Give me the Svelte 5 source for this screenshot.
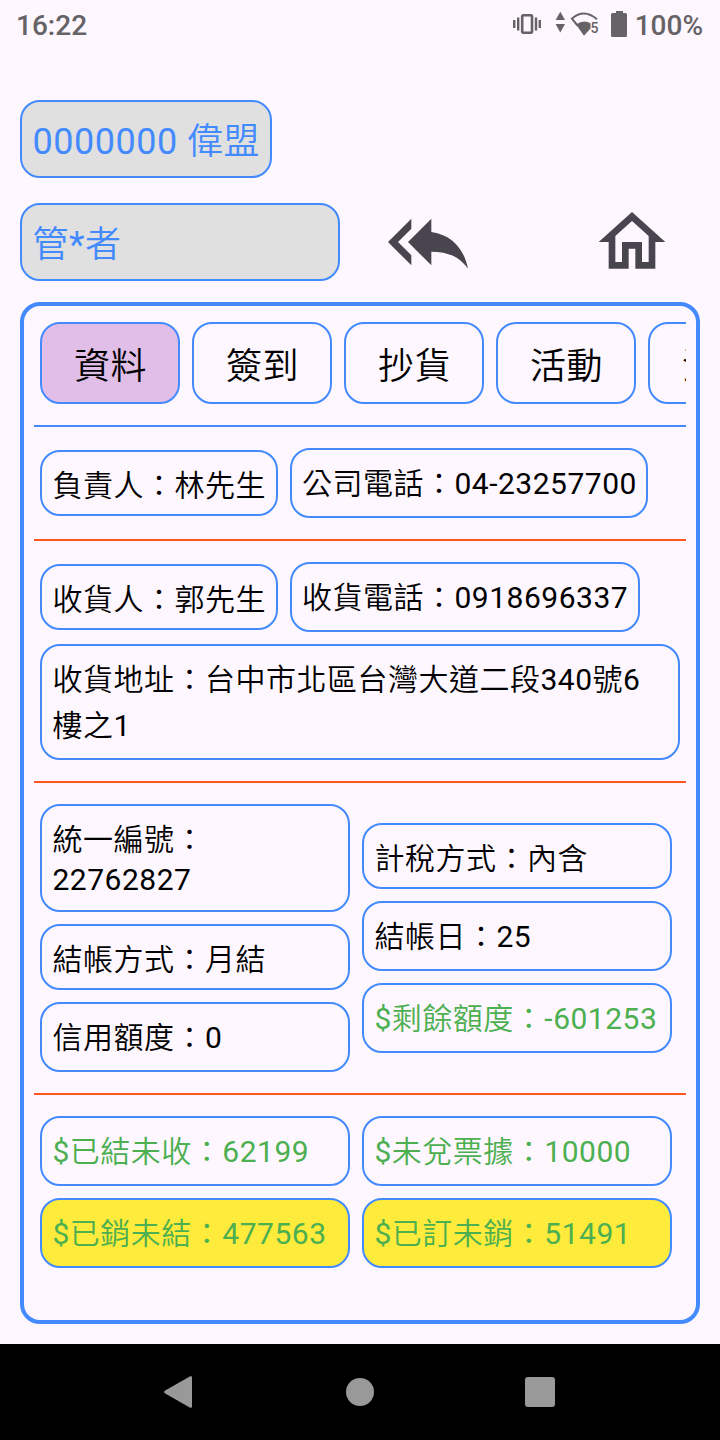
<script lang="ts">
  type Field = { text: string; kind?: 'tall' | 'double' | 'address'; money?: boolean; filled?: boolean };

  const tabs = ['資料', '簽到', '抄貨', '活動', '消息'];
  let active = $state(0);

  const owner: Field[] = [
    { text: '負責人：林先生' },
    { text: '公司電話：04-23257700', kind: 'tall' },
  ];
  const receiver: Field[] = [
    { text: '收貨人：郭先生' },
    { text: '收貨電話：0918696337', kind: 'tall' },
  ];
  const address: Field = { text: '收貨地址：台中市北區台灣大道二段340號6樓之1', kind: 'address' };

  const billing: Field[][] = [
    [
      { text: '統一編號：\n22762827', kind: 'double' },
      { text: '結帳方式：月結' },
      { text: '信用額度：0', kind: 'tall' },
    ],
    [
      { text: '計稅方式：內含' },
      { text: '結帳日：25', kind: 'tall' },
      { text: '$剩餘額度：-601253', kind: 'tall', money: true },
    ],
  ];
  const totals: Field[][] = [
    [
      { text: '$已結未收：62199', kind: 'tall', money: true },
      { text: '$已銷未結：477563', kind: 'tall', money: true, filled: true },
    ],
    [
      { text: '$未兌票據：10000', kind: 'tall', money: true },
      { text: '$已訂未銷：51491', kind: 'tall', money: true, filled: true },
    ],
  ];
</script>

{#snippet field(f: Field)}
  <div class="field {f.kind ?? ''}" class:money={f.money} class:filled={f.filled}>{f.text}</div>
{/snippet}

{#snippet columns(cols: Field[][])}
  <div class="columns">
    {#each cols as col}
      <div class="column">
        {#each col as f}{@render field(f)}{/each}
      </div>
    {/each}
  </div>
{/snippet}

<div class="screen">
  <div class="status-bar">
    <span>16:22</span>
    <div class="status-right">
      <svg class="status-icons" width="120" height="50" viewBox="510 0 120 50" fill="#666367">
        <path d="M513 20h2.4v8H513zM517 17.5h2.4v13H517zM534.8 17.5h2.4v13h-2.4zM538.6 20h2.4v8h-2.4z" />
        <rect x="522.2" y="15.2" width="9.8" height="17.6" rx="1" fill="none" stroke="#666367" stroke-width="2.6" />
        <path d="M560.3 11.7L565 20h-9.4zM555.6 24h9.4l-4.7 8.5z" />
        <path d="M597 19.3Q584 8 571.9 18.7L577.5 25.5" fill="none" stroke="#666367" stroke-width="2" />
        <path d="M576 24.6Q583.5 19 590.5 23.2V28.5L584 35.8z" />
        <text x="590.6" y="33" font-size="14" font-weight="500">5</text>
        <path d="M616 11h7v2h2.5a1.5 1.5 0 0 1 1.5 1.5v21a1.5 1.5 0 0 1-1.5 1.5h-13a1.5 1.5 0 0 1-1.5-1.5v-21a1.5 1.5 0 0 1 1.5-1.5h3.5z" />
      </svg>
      <span>100%</span>
    </div>
  </div>

  <header class="header">
    <div class="chip customer">0000000 偉盟</div>
    <div class="header-row">
      <div class="chip user">管*者</div>
      <button class="icon-btn" aria-label="Back">
        <svg width="80" height="80" viewBox="0 0 24 24" fill="#49454f">
          <path d="M7 8V5l-7 7 7 7v-3l-4-4 4-4zm6 1V5l-7 7 7 7v-4.1c5 0 8.5 1.6 11 5.1-1-5-4-10-11-11z" />
        </svg>
      </button>
      <button class="icon-btn" aria-label="Home">
        <svg width="80" height="80" viewBox="0 0 24 24" fill="#49454f">
          <path d="M12 5.69l5 4.5V18h-2v-6H9v6H7v-7.81l5-4.5M12 3L2 12h3v8h6v-6h2v6h6v-8h3L12 3z" />
        </svg>
      </button>
    </div>
  </header>

  <main class="panel">
    <nav class="tabs">
      {#each tabs as tab, i}
        <button class="tab" class:active={active === i} onclick={() => (active = i)}>{tab}</button>
      {/each}
    </nav>
    <hr class="blue" />
    <div class="row">
      {#each owner as f}{@render field(f)}{/each}
    </div>
    <hr />
    <div class="row">
      {#each receiver as f}{@render field(f)}{/each}
    </div>
    <div class="row second">{@render field(address)}</div>
    <hr />
    {@render columns(billing)}
    <hr />
    {@render columns(totals)}
  </main>

  <div class="nav-bar">
    <svg width="30" height="34" viewBox="0 0 30 34" fill="#999">
      <path d="M27.2 1.3L1.8 15.8a1.4 1.4 0 0 0 0 2.4L27.2 32.7a1.2 1.2 0 0 0 1.8-1V2.3a1.2 1.2 0 0 0-1.8-1z" />
    </svg>
    <span class="nav-home"></span>
    <span class="nav-recent"></span>
  </div>
</div>

<style>
  :global(body) { margin: 0; background: #fef7ff; }

  .screen {
    display: flex;
    flex-direction: column;
    width: 720px;
    height: 1440px;
    overflow: hidden;
    background: #fef7ff;
    color: #000;
    font-family: Roboto, "Noto Sans CJK TC DemiLight", "Noto Sans CJK TC", sans-serif;
    letter-spacing: 0.5px;
  }
  .screen * { box-sizing: border-box; }

  .status-bar {
    display: flex;
    justify-content: space-between;
    height: 50px;
    padding: 0 17px 0 16px;
    font-size: 28px;
    font-weight: 500;
    line-height: 51px;
    letter-spacing: 0;
    color: #666367;
  }
  .status-right { display: flex; gap: 5px; }
  .status-icons { display: block; }

  .header { padding: 50px 20px 21px; }
  .chip {
    height: 78px;
    padding: 14px 9.5px 0 10.5px;
    border: 2px solid #448aff;
    border-radius: 20px;
    background: #e0e0e0;
    color: #448aff;
    font-size: 36px;
    line-height: 52px;
    white-space: nowrap;
  }
  .customer { width: fit-content; }
  .header-row { display: flex; align-items: flex-start; margin-top: 25px; }
  .user { width: 320px; }
  .icon-btn {
    margin: -1px 0 -1px 48px;
    padding: 0;
    border: none;
    background: none;
  }
  .icon-btn + .icon-btn { margin-left: 124px; }
  .icon-btn svg { display: block; }

  .panel {
    flex: none;
    height: 1022px;
    margin: 0 20px 20px;
    padding: 16px 10px 0;
    border: 4px solid #448aff;
    border-radius: 20px;
  }

  .tabs { display: flex; gap: 12px; padding-left: 6px; overflow: hidden; }
  .tab {
    flex: none;
    width: 140px;
    height: 82px;
    padding: 7px 0 0 1px;
    border: 2px solid #448aff;
    border-radius: 20px;
    background: none;
    color: #000;
    font: inherit;
    font-size: 36px;
    line-height: 52px;
    letter-spacing: 0.5px;
  }
  .tab.active { background: #e1bee7; }

  hr { height: 2px; margin: 21px 0; border: none; background: #ff5722; }
  hr.blue { background: #448aff; }

  .row { display: flex; align-items: center; gap: 12px; padding: 0 6px; }
  .row.second { margin-top: 12px; }
  .columns { display: flex; align-items: center; gap: 12px; padding-left: 6px; }
  .column { display: flex; flex-direction: column; gap: 12px; width: 310px; }

  .field {
    height: 66px;
    padding: 13px 9.5px 0 10.5px;
    border: 2px solid #448aff;
    border-radius: 20px;
    font-size: 30px;
    line-height: 42px;
    white-space: pre;
  }
  .field.tall { height: 70px; padding-top: 11px; line-height: 46px; }
  .field.double { height: 108px; padding-top: 14px; line-height: 40px; }
  .field.address { width: 100%; height: 116px; padding-top: 11px; line-height: 46px; white-space: normal; }
  .money { color: #4caf50; }
  .filled { background: #ffeb3b; }

  .nav-bar {
    display: flex;
    align-items: center;
    justify-content: space-between;
    height: 96px;
    padding: 0 165px 0 163px;
    background: #000;
  }
  .nav-home { width: 28px; height: 28px; margin-left: 2px; border-radius: 50%; background: #999; }
  .nav-recent { width: 30px; height: 30px; border-radius: 3px; background: #999; }
</style>
